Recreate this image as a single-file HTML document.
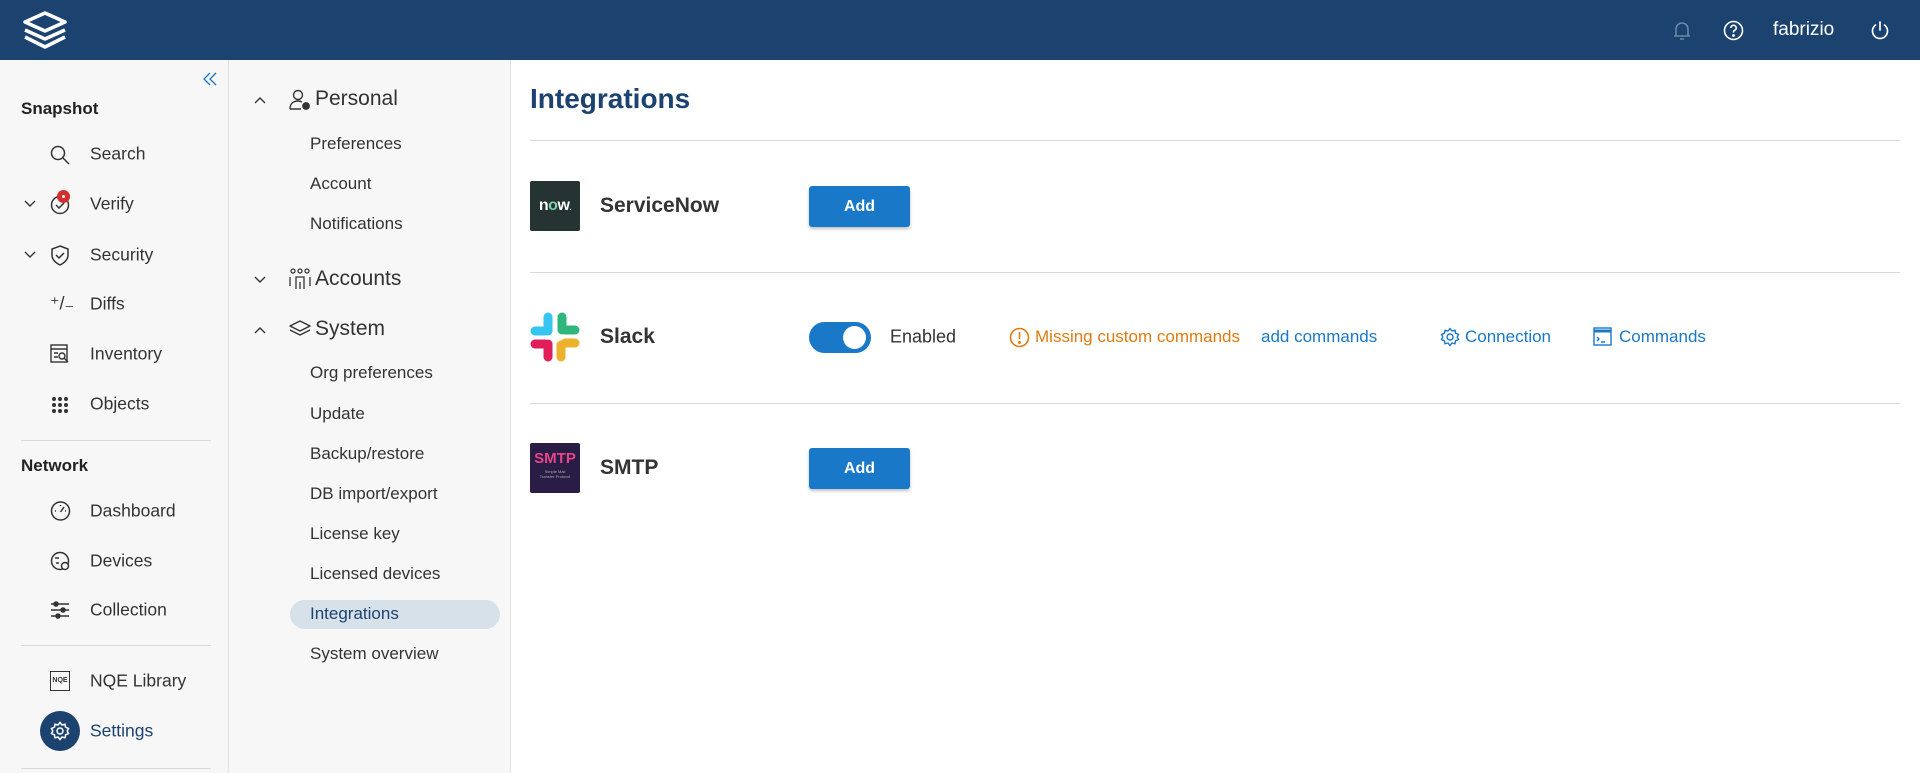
<!DOCTYPE html>
<html><head><meta charset="utf-8"><style>
*{box-sizing:border-box;margin:0;padding:0}
body{width:1920px;height:773px;overflow:hidden;font-family:"Liberation Sans",sans-serif;color:#2b2b2b;background:#fff;position:relative}
.abs{position:absolute}
.hdr{left:0;top:0;width:1920px;height:60px;background:#1c4270}
.side1{left:0;top:60px;width:229px;height:713px;background:#f7f7f7;border-right:1px solid #e2e2e2}
.side2{left:229px;top:60px;width:282px;height:713px;background:#f7f7f7;border-right:1px solid #e2e2e2}
.t{position:absolute;white-space:nowrap;transform:translateY(-50%)}
.nav{font-size:17.5px;color:#333}
.sec{font-size:17px;font-weight:bold;color:#222}
.sub{font-size:17px;color:#333}
.ttl{font-size:21px;color:#333}
.hr{position:absolute;height:1px;background:#d9d9d9}
.btn{position:absolute;width:101px;height:41px;background:#1a78c8;border-radius:3px;color:#fff;font-size:16px;font-weight:bold;text-align:center;line-height:41px;box-shadow:0 2px 3px rgba(0,0,0,.25)}
.name{font-size:21px;font-weight:bold;color:#333}
svg{position:absolute;overflow:visible}
</style></head><body>
<div class="abs hdr"></div>
<svg style="left:20px;top:10px" width="50" height="40" viewBox="0 0 50 40" fill="none" stroke="#fff" stroke-width="3.5" stroke-linejoin="round">
<path d="M25 3 L45 12 L25 21 L5 12 Z"/><path d="M5 20 L25 29 L45 20"/><path d="M5 27 L25 37 L45 27"/>
</svg>
<svg style="left:1672px;top:20px" width="20" height="22" viewBox="0 0 20 22" fill="none" stroke="#6d87a8" stroke-width="1.6"><path d="M4 16 V9 a6 6 0 0 1 12 0 V16 H2 H18 M8 19 h4"/></svg>
<svg style="left:1723px;top:20px" width="21" height="21" viewBox="0 0 21 21" fill="none" stroke="#fff" stroke-width="1.6"><circle cx="10.5" cy="10.5" r="9"/><path d="M7.8 8 a2.7 2.7 0 1 1 3.6 2.5 c-.8.3-.9 1-.9 2"/><circle cx="10.5" cy="15.5" r=".6" fill="#fff"/></svg>
<div class="t" style="left:1773px;top:30px;color:#fff;font-size:19px">fabrizio</div>
<svg style="left:1870px;top:20px" width="20" height="21" viewBox="0 0 20 21" fill="none" stroke="#fff" stroke-width="1.7" stroke-linecap="round"><path d="M10 2v8"/><path d="M5.5 5a7.5 7.5 0 1 0 9 0"/></svg>

<div class="abs side1"></div>
<div class="abs side2"></div>
<svg style="left:203px;top:72px" width="14" height="14" viewBox="0 0 14 14" fill="none" stroke="#1a78c8" stroke-width="1.3"><path d="M7 1 L1 7 L7 13 M13 1 L7 7 L13 13"/></svg>

<div class="t sec" style="left:21px;top:109px">Snapshot</div>
<svg style="left:50px;top:145px" width="20" height="20" viewBox="0 0 20 20" fill="none" stroke="#333" stroke-width="1.5"><circle cx="8" cy="8" r="6.5"/><path d="M13 13 L19 19"/></svg>
<div class="t nav" style="left:90px;top:154px">Search</div>
<svg style="left:24px;top:200px" width="12" height="8" viewBox="0 0 12 8" fill="none" stroke="#333" stroke-width="1.4"><path d="M1 1 L6 6 L11 1"/></svg>
<svg style="left:50px;top:195px" width="20" height="20" viewBox="0 0 20 20" fill="none" stroke="#333" stroke-width="1.5"><circle cx="10" cy="10" r="8.5"/><path d="M6 10 L9 13 L14 8"/></svg>
<div class="abs" style="left:57px;top:190px;width:13px;height:13px;border-radius:50%;background:#d32f2f"></div>
<div class="abs" style="left:62px;top:195px;width:3px;height:3px;border-radius:50%;background:#fff"></div>
<div class="t nav" style="left:90px;top:204px">Verify</div>
<svg style="left:24px;top:251px" width="12" height="8" viewBox="0 0 12 8" fill="none" stroke="#333" stroke-width="1.4"><path d="M1 1 L6 6 L11 1"/></svg>
<svg style="left:50px;top:245px" width="20" height="21" viewBox="0 0 20 21" fill="none" stroke="#333" stroke-width="1.5"><path d="M10 1 L18 4 V10 C18 15 14 18 10 20 C6 18 2 15 2 10 V4 Z"/><path d="M6 10 L9 13 L14 8"/></svg>
<div class="t nav" style="left:90px;top:255px">Security</div>
<div class="t" style="left:50px;top:304px;font-size:18px;color:#333">⁺/₋</div>
<div class="t nav" style="left:90px;top:304px">Diffs</div>
<svg style="left:50px;top:344px" width="20" height="20" viewBox="0 0 20 20" fill="none" stroke="#333" stroke-width="1.4"><rect x="1" y="1" width="16" height="17"/><path d="M1 5h16M4 9h4M4 13h4"/><circle cx="12" cy="12" r="3"/><path d="M14 14l4 4"/></svg>
<div class="t nav" style="left:90px;top:354px">Inventory</div>
<svg style="left:51px;top:396px" width="18" height="18" viewBox="0 0 18 18" fill="#333"><circle cx="3" cy="3" r="2"/><circle cx="9" cy="3" r="2"/><circle cx="15" cy="3" r="2"/><circle cx="3" cy="9" r="2"/><circle cx="9" cy="9" r="2"/><circle cx="15" cy="9" r="2"/><circle cx="3" cy="15" r="2"/><circle cx="9" cy="15" r="2"/><circle cx="15" cy="15" r="2"/></svg>
<div class="t nav" style="left:90px;top:404px">Objects</div>
<div class="hr" style="left:21px;top:440px;width:190px"></div>
<div class="t sec" style="left:21px;top:466px">Network</div>
<svg style="left:50px;top:501px" width="21" height="20" viewBox="0 0 21 20" fill="none" stroke="#333" stroke-width="1.5"><circle cx="10.5" cy="10" r="9"/><path d="M10.5 11 L14 6 M5 10h1M15 10h1M10.5 4v1"/></svg>
<div class="t nav" style="left:90px;top:511px">Dashboard</div>
<svg style="left:50px;top:551px" width="21" height="20" viewBox="0 0 21 20" fill="none" stroke="#333" stroke-width="1.5"><circle cx="10" cy="10" r="8.5"/><circle cx="15" cy="15" r="3.5" fill="#f7f7f7"/><path d="M5 7h4M6 12h3"/></svg>
<div class="t nav" style="left:90px;top:561px">Devices</div>
<svg style="left:50px;top:600px" width="20" height="20" viewBox="0 0 20 20" fill="none" stroke="#333" stroke-width="1.5"><path d="M1 4h18M1 10h18M1 16h18"/><circle cx="6" cy="4" r="2" fill="#333"/><circle cx="13" cy="10" r="2" fill="#333"/><circle cx="8" cy="16" r="2" fill="#333"/></svg>
<div class="t nav" style="left:90px;top:610px">Collection</div>
<div class="hr" style="left:21px;top:645px;width:190px"></div>
<div class="abs" style="left:50px;top:671px;width:20px;height:20px;border:1.5px solid #333;font-size:7px;font-weight:bold;line-height:17px;text-align:center;color:#333">NQE</div>
<div class="t nav" style="left:90px;top:681px">NQE Library</div>
<div class="abs" style="left:40px;top:711px;width:40px;height:40px;border-radius:50%;background:#1c4270"></div>
<svg style="left:50px;top:721px" width="20" height="20" viewBox="0 0 20 20" fill="none" stroke="#fff" stroke-width="1.5"><circle cx="10" cy="10" r="3"/><path d="M10 1.5l2 2.5 3-.8.6 3 2.9 1.3-1.3 2.5 1.3 2.5-2.9 1.3-.6 3-3-.8-2 2.5-2-2.5-3 .8-.6-3L1.5 12.5 2.8 10 1.5 7.5l2.9-1.3.6-3 3 .8z"/></svg>
<div class="t nav" style="left:90px;top:731px;color:#1c4270">Settings</div>
<div class="hr" style="left:21px;top:768px;width:190px"></div>

<svg style="left:254px;top:96px" width="12" height="8" viewBox="0 0 12 8" fill="none" stroke="#333" stroke-width="1.4"><path d="M1 7 L6 2 L11 7"/></svg>
<svg style="left:289px;top:89px" width="22" height="22" viewBox="0 0 22 22" fill="none" stroke="#333" stroke-width="1.4"><circle cx="9" cy="6" r="4.5"/><path d="M1 20 C1 14 5 12 9 12 C11 12 12 12.5 13 13 M1 20 h11"/><circle cx="17" cy="17" r="3.2" fill="#333"/></svg>
<div class="t ttl" style="left:315px;top:99px">Personal</div>
<div class="t sub" style="left:310px;top:144px">Preferences</div>
<div class="t sub" style="left:310px;top:184px">Account</div>
<div class="t sub" style="left:310px;top:224px">Notifications</div>
<svg style="left:254px;top:276px" width="12" height="8" viewBox="0 0 12 8" fill="none" stroke="#333" stroke-width="1.4"><path d="M1 1 L6 6 L11 1"/></svg>
<svg style="left:289px;top:268px" width="22" height="22" viewBox="0 0 22 22" fill="none" stroke="#333" stroke-width="1.3"><circle cx="4" cy="3" r="2"/><circle cx="11" cy="3" r="2"/><circle cx="18" cy="3" r="2"/><path d="M7 21V9h8v12M1 18V9M21 18V9M11 14v7"/></svg>
<div class="t ttl" style="left:315px;top:279px">Accounts</div>
<svg style="left:254px;top:326px" width="12" height="8" viewBox="0 0 12 8" fill="none" stroke="#333" stroke-width="1.4"><path d="M1 7 L6 2 L11 7"/></svg>
<svg style="left:289px;top:320px" width="22" height="18" viewBox="0 0 22 18" fill="none" stroke="#333" stroke-width="1.5" stroke-linejoin="round"><path d="M11 1L21 6 11 11 1 6Z"/><path d="M1 10l10 5 10-5"/></svg>
<div class="t ttl" style="left:315px;top:329px">System</div>
<div class="t sub" style="left:310px;top:373px">Org preferences</div>
<div class="t sub" style="left:310px;top:414px">Update</div>
<div class="t sub" style="left:310px;top:454px">Backup/restore</div>
<div class="t sub" style="left:310px;top:494px">DB import/export</div>
<div class="t sub" style="left:310px;top:534px">License key</div>
<div class="t sub" style="left:310px;top:574px">Licensed devices</div>
<div class="abs" style="left:290px;top:600px;width:210px;height:29px;border-radius:15px;background:#d7e1ea"></div>
<div class="t sub" style="left:310px;top:614px;color:#1c4270">Integrations</div>
<div class="t sub" style="left:310px;top:654px">System overview</div>

<div class="t" style="left:530px;top:99px;font-size:28px;font-weight:bold;color:#1c4270">Integrations</div>
<div class="hr" style="left:530px;top:140px;width:1370px"></div>

<div class="abs" style="left:530px;top:181px;width:50px;height:50px;background:#263333;border-radius:2px;color:#fff;font-size:16px;font-weight:bold;line-height:50px;text-align:center;letter-spacing:-0.5px">n<span style="color:#7fd3a7">o</span>w<span style="font-size:8px">.</span></div>
<div class="t name" style="left:600px;top:206px">ServiceNow</div>
<div class="btn" style="left:809px;top:186px">Add</div>
<div class="hr" style="left:530px;top:272px;width:1370px"></div>

<svg style="left:530px;top:312px" width="50" height="50" viewBox="0 0 50 50" stroke-linecap="round" stroke-width="9" fill="none">
<path d="M18 5 v14" stroke="#36c5f0"/><path d="M5 19 h10" stroke="#36c5f0"/>
<path d="M32 5 v13" stroke="#2eb67d"/><path d="M35 31 h10" stroke="#ecb22e"/><path d="M31 33 v12" stroke="#ecb22e"/>
<path d="M5 32 h10" stroke="#e01e5a"/><path d="M18 32 v13" stroke="#e01e5a"/><path d="M45 18 h-10" stroke="#2eb67d"/>
</svg>
<div class="t name" style="left:600px;top:337px">Slack</div>
<div class="abs" style="left:809px;top:322px;width:62px;height:31px;border-radius:16px;background:#1a78c8"></div>
<div class="abs" style="left:843px;top:326px;width:23px;height:23px;border-radius:50%;background:#fff"></div>
<div class="t" style="left:890px;top:337px;font-size:18px;color:#333">Enabled</div>
<svg style="left:1009px;top:327px" width="21" height="21" viewBox="0 0 21 21" fill="none" stroke="#e07b10" stroke-width="1.6"><circle cx="10.5" cy="10.5" r="9"/><path d="M10.5 5v7"/><circle cx="10.5" cy="15.5" r=".7" fill="#e07b10"/></svg>
<div class="t" style="left:1035px;top:337px;font-size:17px;color:#e07b10">Missing custom commands</div>
<div class="t" style="left:1261px;top:337px;font-size:17px;color:#1a78c8">add commands</div>
<svg style="left:1440px;top:327px" width="20" height="20" viewBox="0 0 20 20" fill="none" stroke="#1a78c8" stroke-width="1.4"><circle cx="10" cy="10" r="3"/><path d="M10 1.5l2 2.5 3-.8.6 3 2.9 1.3-1.3 2.5 1.3 2.5-2.9 1.3-.6 3-3-.8-2 2.5-2-2.5-3 .8-.6-3L1.5 12.5 2.8 10 1.5 7.5l2.9-1.3.6-3 3 .8z"/></svg>
<div class="t" style="left:1465px;top:337px;font-size:17px;color:#1a78c8">Connection</div>
<svg style="left:1593px;top:327px" width="19" height="19" viewBox="0 0 19 19" fill="none" stroke="#1a78c8" stroke-width="1.4"><rect x="1" y="1" width="17" height="17"/><path d="M1 4h17" stroke-width="3"/><path d="M4 10l2 2-2 2M8 15h4"/></svg>
<div class="t" style="left:1619px;top:337px;font-size:17px;color:#1a78c8">Commands</div>
<div class="hr" style="left:530px;top:403px;width:1370px"></div>

<div class="abs" style="left:530px;top:443px;width:50px;height:50px;background:#2a1d45;border-radius:2px;text-align:center">
<div style="color:#e8458b;font-size:15px;font-weight:bold;margin-top:8px;line-height:15px">SMTP</div>
<div style="color:#aaa;font-size:4px;line-height:5px;margin-top:3px">Simple Mail<br>Transfer Protocol</div></div>
<div class="t name" style="left:600px;top:468px">SMTP</div>
<div class="btn" style="left:809px;top:448px">Add</div>
</body></html>
